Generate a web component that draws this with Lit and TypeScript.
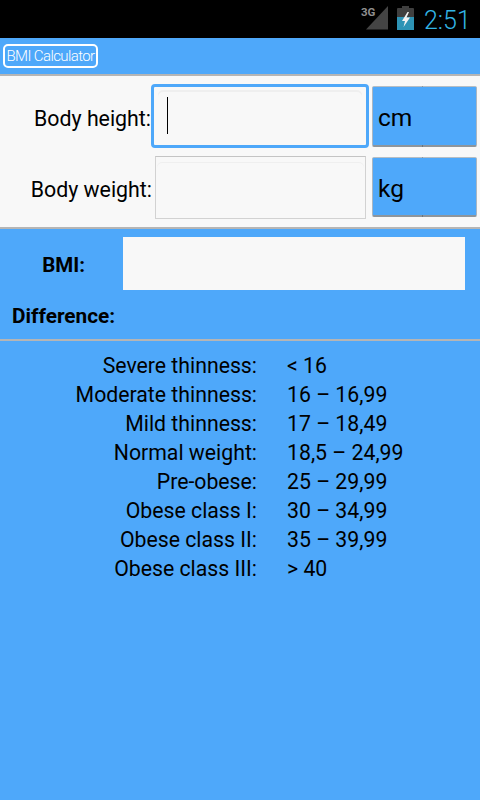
import { LitElement, html, css } from "lit";
import { customElement } from "lit/decorators.js";

const ROWS: [string, string][] = [
  ["Severe thinness:", "< 16"],
  ["Moderate thinness:", "16 – 16,99"],
  ["Mild thinness:", "17 – 18,49"],
  ["Normal weight:", "18,5 – 24,99"],
  ["Pre-obese:", "25 – 29,99"],
  ["Obese class I:", "30 – 34,99"],
  ["Obese class II:", "35 – 39,99"],
  ["Obese class III:", "> 40"],
];

@customElement("app-root")
export class AppRoot extends LitElement {
  static styles = css`
    :host {
      display: flex;
      flex-direction: column;
      width: 480px;
      height: 800px;
      background: #4ea8fa;
      font-family: Roboto, sans-serif;
      color: #000;
      overflow: hidden;
    }
    .status {
      height: 38px;
      background: #000;
      display: flex;
      align-items: center;
      justify-content: flex-end;
      flex: none;
    }
    .status svg { display: block; }
    .clock {
      color: #33b5e5;
      font-size: 25px;
      font-weight: 300;
      width: 46px;
      margin-left: 10px;
      margin-right: 10px;
      padding-top: 3px;
      height: 35px;
      line-height: 35px;
    }
    .signal { margin-right: 9px; margin-top: -2px; }
    .battery { margin-top: -2px; }
    .bar {
      height: 36px;
      flex: none;
      display: flex;
      align-items: center;
      padding-left: 3px;
      border-bottom: 2px solid #b5b5b5;
    }
    .logo {
      height: 20px;
      width: 91px;
      border: 2px solid #fff;
      border-radius: 5px;
      color: #fff;
      font-size: 15px;
      font-weight: 300;
      letter-spacing: -0.6px;
      line-height: 20px;
      text-align: center;
      white-space: nowrap;
      margin-top: -1px;
    }
    .form {
      flex: none;
      height: 151px;
      box-sizing: border-box;
      background: #f8f8f8;
      display: flex;
      flex-direction: column;
    }
    .row {
      display: flex;
      align-items: center;
      flex: none;
    }
    .row.first { margin-top: 8px; height: 64px; }
    .row.second { margin-top: 8px; height: 63px; }
    .lbl {
      font-size: 21.33px;
      text-align: right;
      white-space: nowrap;
      padding-top: 4px;
    }
    .first .lbl { width: 151px; }
    .second .lbl { width: 152px; }
    .input {
      box-sizing: border-box;
      background: #f8f8f8;
      position: relative;
    }
    .focused {
      width: 218px;
      height: 64px;
      border: 3px solid #4ea8fa;
      border-radius: 4px;
      padding: 5px 4px 0;
      display: flex;
    }
    .idle {
      width: 211px;
      height: 63px;
      margin-left: 3px;
      border: 1px solid #d2d2d2;
      border-top-color: #c4c4c4;
      padding: 6px 1px 0;
      display: flex;
    }
    .inner {
      flex: 1;
      border-radius: 5px 5px 0 0;
      box-shadow: 0 -2px 0 #efefef;
      padding: 0 0 0 5px;
    }
    .idle .inner { box-shadow: 0 -1px 0 #efefef; }
    .caret {
      display: block;
      width: 1px;
      height: 37px;
      background: #000;
      margin: 5px 0 0 4px;
    }
    .spinner {
      position: relative;
      box-sizing: border-box;
      width: 105px;
      height: 61px;
      background: #4ea8fa;
      border-radius: 2px;
      border: 1px solid #a9b6c2;
      border-bottom: 2px solid #8d959c;
      border-top-color: #b5bdc4;
      font-size: 24.5px;
      display: flex;
      align-items: center;
      padding: 4px 0 0 5px;
    }
    .spinner::before,
    .spinner::after {
      content: "";
      position: absolute;
      left: 49px;
      width: 1px;
      background: #8f979e;
    }
    .spinner::before { top: -1px; height: 1px; }
    .spinner::after { bottom: -2px; height: 2px; background: #6d747a; }
    .first .spinner { margin-left: 3px; }
    .second .spinner { margin-left: 6px; margin-top: -1px; height: 60px; }
    .rule {
      height: 2px;
      flex: none;
      background: #b5b5b5;
    }
    .bmi {
      display: flex;
      align-items: center;
      flex: none;
      padding-top: 8px;
      height: 53px;
    }
    .bmi b {
      font-size: 20.5px;
      width: 85px;
      text-align: right;
      font-weight: 700;
      padding-top: 2px;
    }
    .out {
      margin-left: 38px;
      width: 342px;
      height: 53px;
      background: #f8f8f8;
    }
    .diff {
      flex: none;
      height: 49px;
      box-sizing: border-box;
      padding: 13px 0 0 12px;
      font-size: 20.8px;
      font-weight: 700;
      line-height: 26px;
    }
    .table {
      display: grid;
      grid-template-columns: 257px auto;
      column-gap: 30px;
      grid-auto-rows: 29px;
      padding-top: 10px;
      font-size: 21.25px;
      line-height: 29px;
    }
    .table .k { text-align: right; white-space: nowrap; }
    .table .v { white-space: nowrap; }
  `;

  render() {
    return html`
      <div class="status">
        <svg class="signal" width="36" height="30" viewBox="0 0 36 30">
          <polygon points="14,26.5 36,3 36,26.5" fill="#444"></polygon>
          <text x="9" y="13" font-family="Roboto, sans-serif" font-weight="700" font-size="11.5" fill="#8f8f8f">3G</text>
        </svg>
        <svg class="battery" width="17" height="24" viewBox="0 0 17 24">
          <rect x="5" y="0" width="7" height="3" fill="#3f3f3f"></rect>
          <rect x="0" y="2" width="17" height="22" rx="1" fill="#3f3f3f"></rect>
          <rect x="0" y="11" width="17" height="13" fill="#2d93b5"></rect>
          <polygon points="10.5,6 5,15 8,15 6.5,21 13,11.5 9.5,11.5 12,6" fill="#f2f2f2"></polygon>
        </svg>
        <span class="clock">2:51</span>
      </div>
      <div class="bar"><div class="logo">BMI Calculator</div></div>
      <div class="form">
        <div class="row first">
          <div class="lbl">Body height:</div>
          <div class="input focused"><div class="inner"><span class="caret"></span></div></div>
          <div class="spinner">cm</div>
        </div>
        <div class="row second">
          <div class="lbl">Body weight:</div>
          <div class="input idle"><div class="inner"></div></div>
          <div class="spinner">kg</div>
        </div>
      </div>
      <div class="rule"></div>
      <div class="bmi"><b>BMI:</b><div class="out"></div></div>
      <div class="diff">Difference:</div>
      <div class="rule"></div>
      <div class="table">
        ${ROWS.map(([k, v]) => html`<div class="k">${k}</div><div class="v">${v}</div>`)}
      </div>
    `;
  }
}
